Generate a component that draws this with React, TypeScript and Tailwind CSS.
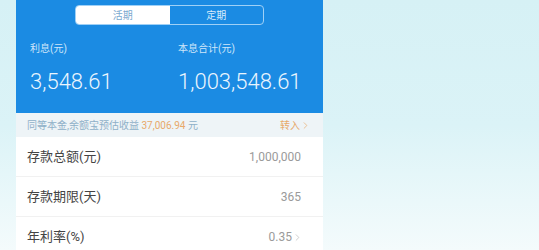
import { ChevronRight } from 'lucide-react'

const rows = [
  { label: '存款总额(元)', value: '1,000,000', arrow: false },
  { label: '存款期限(天)', value: '365', arrow: false },
  { label: '年利率(%)', value: '0.35', arrow: true },
]

export default function App() {
  return (
    <div
      className="w-[539px] h-[250px] overflow-hidden flex items-start bg-gradient-to-b from-[#d6f1f5] via-[#dbf3f7] to-[#f4fbfc]"
      style={{ fontFamily: 'Roboto, "Noto Sans CJK SC", sans-serif' }}
    >
      <div className="ml-[16px] w-[307px] flex flex-col">
        {/* Blue summary */}
        <div className="h-[113px] shrink-0 bg-[#1b8be3] flex flex-col">
          <div className="mt-[5px] mx-auto w-[189px] h-[20px] flex border border-[#9fd0f6] rounded-[4px] overflow-hidden text-[10px]">
            <div className="flex-1 bg-white text-[#7aa9cf] flex items-center justify-center">活期</div>
            <div className="flex-1 text-[#d9ecfb] flex items-center justify-center">定期</div>
          </div>
          <div className="flex mt-[17px]">
            <div className="w-[162px] pl-[14px]">
              <div className="text-[10px] leading-[14px] text-[#cfe6fa]">利息(元)</div>
              <div className="mt-[12px] text-[22px] leading-[28px] text-[#eaf5fe] font-light">3,548.61</div>
            </div>
            <div className="flex-1">
              <div className="text-[10px] leading-[14px] text-[#cfe6fa]">本息合计(元)</div>
              <div className="mt-[12px] text-[22px] leading-[28px] text-[#eaf5fe] font-light">1,003,548.61</div>
            </div>
          </div>
        </div>

        {/* Banner */}
        <div className="h-[24px] shrink-0 bg-[#eef4f7] flex items-center justify-between pl-[11px] pr-[12px] text-[10px]">
          <div className="text-[#8fb0c8]">
            同等本金,余额宝预估收益 <span className="text-[#e8a96a]">37,006.94</span> 元
          </div>
          <div className="flex items-center text-[#e8a96a]">
            转入
            <ChevronRight className="w-[11px] h-[11px]" strokeWidth={1.5} />
          </div>
        </div>

        {/* Rows */}
        <div className="bg-white flex flex-col">
          {rows.map((r, i) => (
            <div
              key={r.label}
              className={`h-[40px] shrink-0 flex items-center justify-between pl-[11px] pr-[22px] ${i < rows.length - 1 ? 'border-b border-[#f1f1f1]' : ''}`}
            >
              <span className="text-[13px] text-[#444]">{r.label}</span>
              <span className="flex items-center text-[12px] text-[#9a9a9a]">
                {r.value}
                {r.arrow && <ChevronRight className="w-[11px] h-[11px] text-[#bbb] -mr-[2px]" strokeWidth={1.5} />}
              </span>
            </div>
          ))}
        </div>
      </div>
    </div>
  )
}
